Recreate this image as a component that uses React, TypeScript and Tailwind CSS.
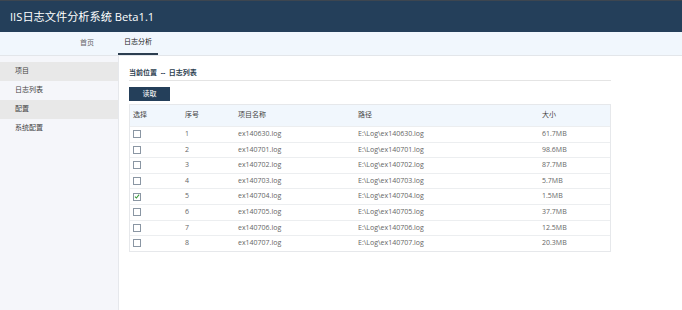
import React from "react";

const rows = [
  { n: 1, name: "ex140630.log", size: "61.7MB" },
  { n: 2, name: "ex140701.log", size: "98.6MB" },
  { n: 3, name: "ex140702.log", size: "87.7MB" },
  { n: 4, name: "ex140703.log", size: "5.7MB" },
  { n: 5, name: "ex140704.log", size: "1.5MB", checked: true },
  { n: 6, name: "ex140705.log", size: "37.7MB" },
  { n: 7, name: "ex140706.log", size: "12.5MB" },
  { n: 8, name: "ex140707.log", size: "20.3MB" },
];

function Box({ checked }: { checked?: boolean }) {
  return (
    <div className="w-[8px] h-[8px] border border-[#8a96a3] bg-white flex items-center justify-center">
      {checked && (
        <svg width="7" height="7" viewBox="0 0 8 8">
          <path d="M1.2 4.2 L3.2 6 L6.8 1.6" fill="none" stroke="#3a9a3a" strokeWidth="1.4" />
        </svg>
      )}
    </div>
  );
}

export default function App() {
  return (
    <div
      className="w-[682px] h-[310px] flex flex-col overflow-hidden bg-white"
      style={{ fontFamily: '"Open Sans", "Noto Sans CJK SC", sans-serif' }}
    >
      <div className="h-[32px] bg-[#243f5a] border-t border-[#3d4650] flex items-center pl-[10px]">
        <span className="text-white text-[11.2px] leading-none">IIS日志文件分析系统 Beta1.1</span>
      </div>
      <div className="h-[24px] bg-[#f1f7fd] border-b border-[#e3e6ea] flex items-stretch text-[7px] text-[#666]">
        <div className="w-[118px] flex items-center justify-end pr-[24px]">首页</div>
        <div className="w-[40px] flex items-center justify-center text-[#222] border-b-2 border-[#2c3e50]">日志分析</div>
      </div>
      <div className="flex flex-1">
        <div className="w-[119px] bg-[#f5f6fa] border-r border-[#e6e8ec] pt-[6px] text-[7px] text-[#444]">
          <div className="h-[19px] bg-[#e8e8e8] flex items-center pl-[15px]">项目</div>
          <div className="h-[19px] flex items-center pl-[15px]">日志列表</div>
          <div className="h-[19px] bg-[#e8e8e8] flex items-center pl-[15px]">配置</div>
          <div className="h-[19px] flex items-center pl-[15px]">系统配置</div>
        </div>
        <div className="flex-1 pl-[10px] pt-[11px]">
          <div className="w-[482px] h-[14px] border-b border-[#e4e4e4] flex items-center text-[7px] font-bold text-[#2c3e50]">
            当前位置 &nbsp;-- &nbsp;日志列表
          </div>
          <div className="mt-[6px] w-[41px] h-[14px] bg-[#243f5a] text-white text-[7px] flex items-center justify-center">
            读取
          </div>
          <div className="mt-[3px] w-[482px] border border-[#e6e8eb] text-[7px] text-[#666]">
            <div className="h-[21px] bg-[#f1f7fd] flex items-center text-[#444]">
              <div className="w-[55px] pl-[3px]">选择</div>
              <div className="w-[53px]">序号</div>
              <div className="w-[120px]">项目名称</div>
              <div className="w-[184px]">路径</div>
              <div>大小</div>
            </div>
            {rows.map((r) => (
              <div key={r.n} className="h-[15.6px] flex items-center border-t border-[#eceef0] text-[#666]">
                <div className="w-[55px] pl-[3px]">
                  <Box checked={r.checked} />
                </div>
                <div className="w-[53px] text-[#666]">{r.n}</div>
                <div className="w-[120px] text-[#666]">{r.name}</div>
                <div className="w-[184px] text-[#666]">E:\Log\{r.name}</div>
                <div className="text-[#666]">{r.size}</div>
              </div>
            ))}
          </div>
        </div>
      </div>
    </div>
  );
}
